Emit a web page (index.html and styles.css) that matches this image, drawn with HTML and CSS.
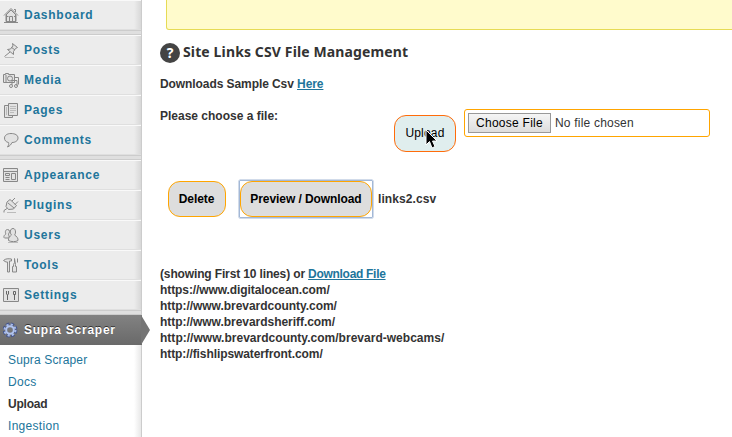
FILE: index.html
```html
<!DOCTYPE html>
<html lang="en">
<head>
<meta charset="utf-8">
<title>Site Links CSV File Management</title>
<link rel="stylesheet" href="styles.css">
</head>
<body>
<nav class="sidebar">
  <a class="item"><svg class="icon" viewBox="0 0 16 16"><path class="fill" d="M3 8L8 3l5 5v6.500H3z"/><path d="M1 8.500L8 1.500l7 7M3.500 8v6.500h9V8M6.500 14V9.500h3V14M12.500 5V2.500h-1.500M4 9.500h1.500M11 9.500h1.500M1 15.500h14"/></svg><span>Dashboard</span></a>
  <div class="sep"></div>
  <a class="item"><svg class="icon" viewBox="0 0 16 16"><path class="fill" d="M9.500 1.500l5 4-2 1-2 3v3l-6-5 3-.5 2.500-3z"/><path d="M7 10l-5.500 4.500M8 5L12 8"/><path class="soft" d="M2 15.500h9"/></svg><span>Posts</span></a>
  <a class="item"><svg class="icon" viewBox="0 0 16 16"><path class="fill" d="M.5 2.500h2v-1h3v1h6v8H.5z"/><circle cx="7" cy="6.500" r="2.500"/><path d="M3 3v7M11.500 5.500h4v7M9 8v5M9 8.500h5V14"/><circle cx="8" cy="14" r="1.500"/><circle cx="13" cy="14" r="1.500"/></svg><span>Media</span></a>
  <a class="item"><svg class="icon" viewBox="0 0 16 16"><path class="fill" d="M1.500 3.500h8v12h-8z"/><path class="fill" d="M5.500 1.500h9v12h-9z"/><path class="soft" d="M7 4.500h6M7 6.500h6M7 8.500h6M7 10.500h4M3.500 5v8"/></svg><span>Pages</span></a>
  <a class="item"><svg class="icon" viewBox="0 0 16 16"><path class="fill" d="M8 1.500c4 0 7 1.500 7 4.500S12 10.500 9 10.500c-1 2-2 3.500-4.500 4.500 1-1.500 1.500-3 1-4.500C3 10 1.500 8.500 1.500 6S4 1.500 8 1.500z"/></svg><span>Comments</span></a>
  <div class="sep"></div>
  <a class="item"><svg class="icon" viewBox="0 0 16 16"><path class="fill" d="M.5 1.500h14v13H.5z"/><path d="M1 4.500h13M2.500 6.500h4v2h-4zM2.500 10.500h4M2.500 12.500h4M8.500 6.500h4v6h-4z"/></svg><span>Appearance</span></a>
  <a class="item"><svg class="icon" viewBox="0 0 16 16"><path class="fill" d="M4 5l3-2.500 6.500 6-3 3.500-5 .5-2.500-3z"/><path d="M9 4l3-3M12 7.500l3-3M5 6l6 5M4 11.500L1 13.500v2"/><path class="soft" d="M4 15.500h9"/></svg><span>Plugins</span></a>
  <a class="item"><svg class="icon" viewBox="0 0 16 16"><path class="fill" d="M4.500 2.500a2 2 0 012 2c0 1-.5 2-1 2.500l1 4H1.500c-1.500-1 0-3.500 1.500-4-1-1-1-4.500 1.500-4.500z"/><path class="fill" d="M10 1.500c2 0 2.500 2 2.500 3.500S12 7.500 11.500 8c2 1 4 3.500 3.500 5.500-2 1.500-7 1.500-9.500 0C5 11 7 9 8.500 8 6.500 6 7 1.500 10 1.500z"/><path class="soft" d="M5 15.500h10"/></svg><span>Users</span></a>
  <a class="item"><svg class="icon" viewBox="0 0 16 16"><path class="fill" d="M.5 3.500c2-2 5-2 8-1.500v2H6.500v11h-2V5H3zM11.500 1.500v4l-1 2v2h-1v5.500h4V9.500h-1v-2zM14.500 1.500v4"/></svg><span>Tools</span></a>
  <a class="item"><svg class="icon" viewBox="0 0 16 16"><path class="fill" d="M.5 1.500h15v13H.5z"/><path class="heavy" d="M3.500 4v3l1 1 1-1V4M4.500 8v5M10.500 4.500h2v3h-2zM11.500 8v5"/></svg><span>Settings</span></a>
  <div class="sep"></div>
  <a class="item current"><svg class="icon" viewBox="0 0 16 16"><circle class="shade" cx="7" cy="8" r="5.200"/><circle class="teeth" cx="7" cy="8" r="5.500"/><circle class="gear" cx="7" cy="8" r="3.800"/></svg><span>Supra Scraper</span><svg class="arrow" viewBox="0 0 9 30"><path d="M0 0L9 15 0 30z"/></svg></a>
  <div class="submenu">
    <a>Supra Scraper</a>
    <a class="wide">Docs</a>
    <a class="active">Upload</a>
    <a class="wide">Ingestion</a>
  </div>
</nav>
<main class="content">
  <div class="notice"></div>
  <h1 class="title"><span class="help">?</span><span>Site Links CSV File Management</span></h1>
  <p class="sample"><span>Downloads Sample Csv</span> <a>Here</a></p>
  <div class="upload-row">
    <span class="choose-label">Please choose a file:</span>
    <button class="upload">Upload<svg class="cursor" viewBox="0 0 14 20"><path d="M1 1v15l3.500-3.500L7 19l3-1.500L7.500 12H12z"/></svg></button>
    <div class="file"><button class="choose">Choose File</button><span>No file chosen</span></div>
  </div>
  <div class="file-row">
    <button class="pill delete">Delete</button>
    <div class="focus"><button class="pill preview">Preview / Download</button></div>
    <span class="name">links2.csv</span>
  </div>
  <div class="lines">
    <div class="intro">(showing First 10 lines) or <a>Download File</a></div>
    <div class="tight">https://www.digitalocean.com/</div>
    <div class="snug">http://www.brevardcounty.com/</div>
    <div class="snug">http://www.brevardsheriff.com/</div>
    <div class="loose">http://www.brevardcounty.com/brevard-webcams/</div>
    <div class="tight">http://fishlipswaterfront.com/</div>
  </div>
</main>
</body>
</html>
```
FILE: styles.css
```css
* { box-sizing: border-box; }
body {
  margin: 0;
  display: flex;
  width: 732px;
  height: 437px;
  overflow: hidden;
  background: #fff;
  color: #333;
  font: 12px/16px "Liberation Sans", Arial, sans-serif;
}
a { color: #21759b; }
p, h1 { margin: 0; }
button { font-family: inherit; padding: 0; color: #000; }

.sidebar {
  width: 142px;
  flex: none;
  height: 437px;
  background: #ececec;
  border-right: 1px solid #ccc;
}
.item {
  position: relative;
  display: flex;
  align-items: center;
  gap: 5px;
  height: 30px;
  padding-left: 3px;
  border-top: 1px solid #f9f9f9;
  border-bottom: 1px solid #dfdfdf;
  background: linear-gradient(to right, transparent 134px, #d8d8d8);
  font-size: 12px;
  font-weight: bold;
  letter-spacing: .75px;
  white-space: nowrap;
}
.sep {
  height: 5px;
  background: #dfdfdf;
  border-top: 1px solid #ccc;
  border-bottom: 1px solid #ccc;
}
.icon {
  width: 16px;
  height: 16px;
  flex: none;
  fill: none;
  stroke: #888;
}
.icon .fill { fill: #e2e2e2; }
.icon .soft { stroke: #bbb; }
.icon .heavy { stroke: #666; }
.current {
  width: 142px;
  border: 0;
  color: #fff;
  background: linear-gradient(#828282, #696969);
  text-shadow: 0 -1px 0 #333;
}
.current .shade { stroke: #46568a; stroke-width: 4.5; stroke-dasharray: 2.9 1.184; }
.current .teeth { stroke: #a9bce8; stroke-width: 2; stroke-dasharray: 2.2 2.12; }
.current .gear { stroke: #b2c4ee; stroke-width: 2; }
.arrow {
  position: absolute;
  left: 141px;
  top: 0;
  width: 9px;
  height: 30px;
  fill: #757575;
}
.submenu {
  height: 92px;
  padding: 4px 0 0 8px;
  background: linear-gradient(to right, #fff 134px, #e8e8e8);
}
.submenu a { display: block; line-height: 22px; letter-spacing: .15px; }
.submenu .wide { letter-spacing: .3px; }
.submenu .active { color: #333; font-weight: bold; letter-spacing: -.2px; }

.content { flex: 1; min-width: 0; padding-left: 18px; font-weight: bold; }
.content a { text-decoration: underline; }
.notice {
  height: 30px;
  margin: 0 -5px 0 6px;
  background: #fffbcc;
  border: 1px solid #e6db55;
  border-top: 0;
  border-radius: 0 0 3px 3px;
}
.title {
  display: flex;
  align-items: center;
  gap: 3px;
  height: 20px;
  margin-top: 13px;
  font: bold 14px/20px "Noto Sans", sans-serif;
}
.title span:last-child { margin-top: -3px; letter-spacing: .13px; }
.help {
  width: 20px;
  height: 20px;
  border-radius: 50%;
  background: #444;
  color: #fff;
  text-align: center;
}
.sample { margin-top: 13px; letter-spacing: -.08px; }
.upload-row { display: flex; align-items: flex-start; height: 44px; margin-top: 16px; }
.choose-label { width: 234px; }
.upload {
  position: relative;
  width: 62px;
  height: 37px;
  margin: 7px 8px 0 0;
  padding-bottom: 2px;
  border: 1px solid #ff6c0a;
  border-radius: 12px;
  background: #e0eeee;
  font-size: 12px;
  letter-spacing: .2px;
}
.cursor {
  position: absolute;
  left: 30px;
  top: 13px;
  width: 14px;
  height: 20px;
  fill: #000;
  stroke: #fff;
}
.file {
  display: flex;
  align-items: center;
  width: 246px;
  height: 28px;
  margin-top: 1px;
  padding-left: 3px;
  gap: 4px;
  border: 1px solid orange;
  border-radius: 3px;
  font-weight: normal;
  letter-spacing: .2px;
}
.choose {
  width: 83px;
  height: 20px;
  border: 1px solid #999;
  background: linear-gradient(#f5f5f5, #ddd);
  font-size: 12px;
  letter-spacing: .25px;
}
.file-row { display: flex; align-items: center; height: 38px; margin: 28px 0 0 8px; }
.pill {
  height: 36px;
  border: 1px solid orange;
  border-radius: 12px;
  background: #ddd;
  font-size: 12px;
  font-weight: bold;
  letter-spacing: -.08px;
}
.delete { width: 58px; margin-right: 13px; padding-right: 1px; }
.focus {
  display: flex;
  height: 38px;
  margin-right: 5px;
  border: 1px solid #a3b8d6;
  border-radius: 1px;
  box-shadow: 0 0 0 .5px #a3b8d6;
}
.preview { width: 132px; }
.name { letter-spacing: .1px; }
.lines { margin-top: 48px; }
.intro { letter-spacing: -.14px; }
.intro a { letter-spacing: -.3px; }
.tight { letter-spacing: -.09px; }
.snug { letter-spacing: -.04px; }
.loose { letter-spacing: .02px; }
```
